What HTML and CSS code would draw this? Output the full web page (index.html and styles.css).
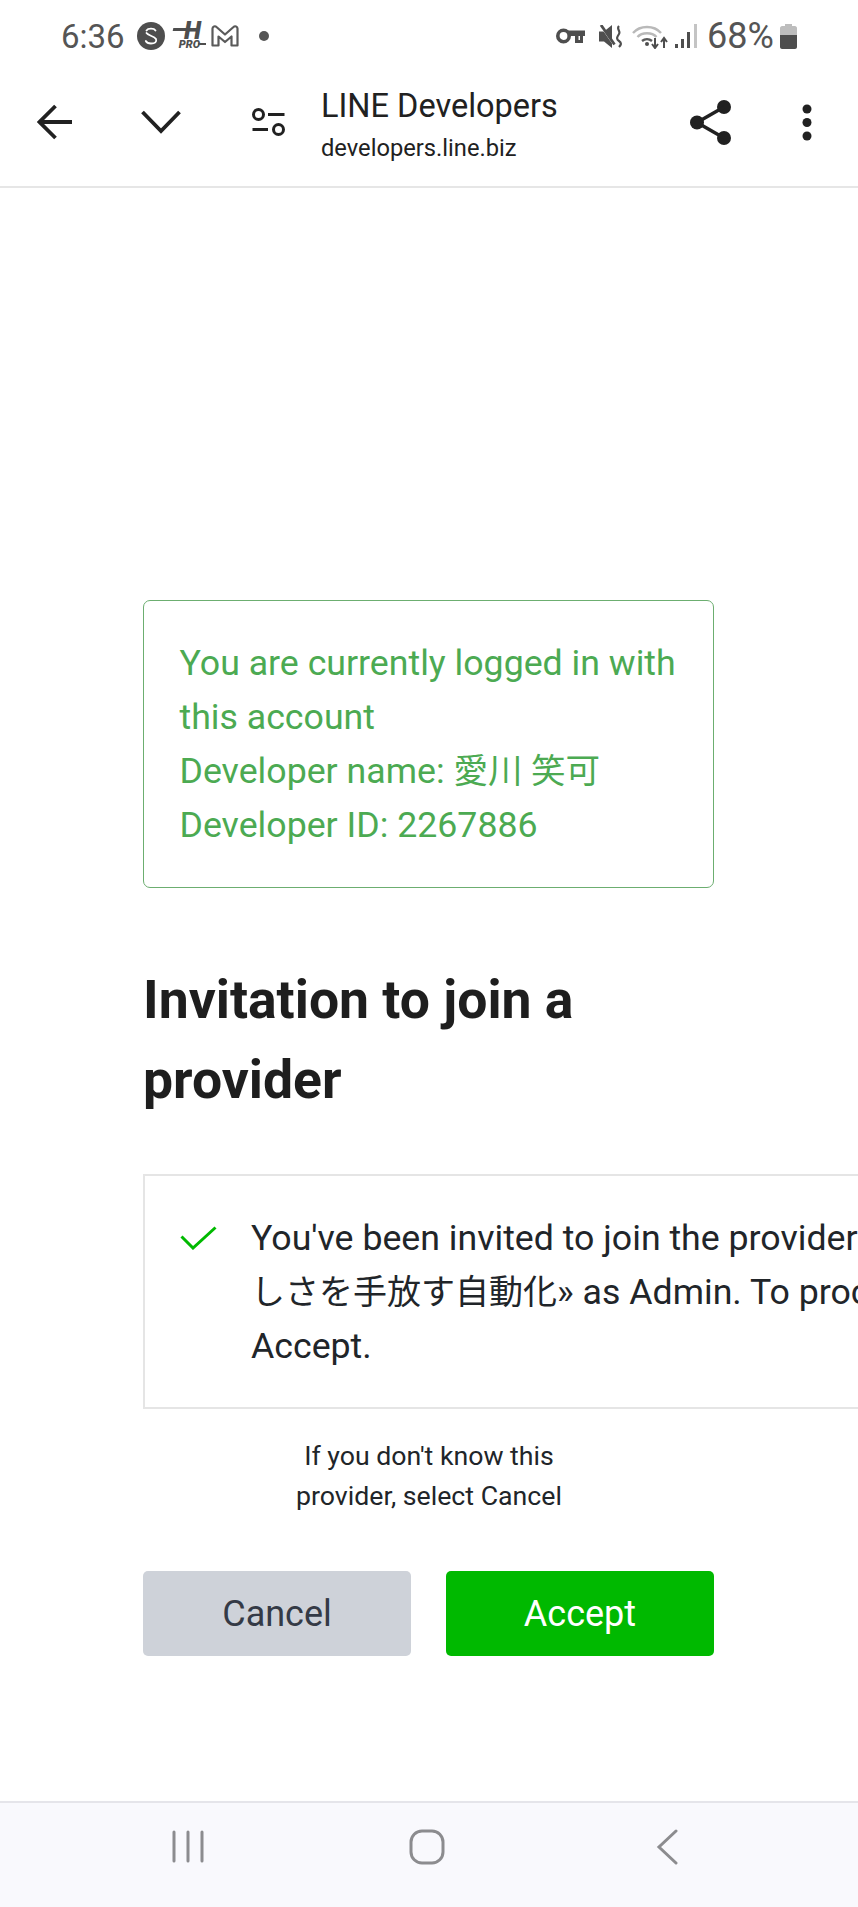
FILE: index.html
```html
<!DOCTYPE html>
<html lang="en">
<head>
<meta charset="utf-8">
<title>LINE Developers</title>
<link rel="stylesheet" href="styles.css">
</head>
<body>
<div class="screen">
  <div class="status">
    <span class="time">6:36</span>
    <svg class="ic-s" viewBox="0 0 28 28"><circle cx="14" cy="14" r="14" fill="#4e4e4e"/><path d="M9.500 8.500C11 6 17 6 18.500 8.500M9.500 11C11 13.500 17 14 19 17 20 20 18 21.500 14 21.500 11 21.500 9.500 20.500 8.800 19" fill="none" stroke="#fff" stroke-width="1.800" stroke-linecap="round"/></svg>
    <span class="ic-h"><span class="h-main">H</span><span class="h-pro">PRO</span></span>
    <svg class="ic-m" viewBox="0 0 28 22"><path d="M1.500 3.500V20.500H7.500V11.500L14 17 20.500 11.500V20.500H26.500V3.500C26.500 1.500 24 .5 22.500 2L14 9.500 5.500 2C4 .5 1.500 1.500 1.500 3.500Z" fill="none" stroke="#5a5a5a" stroke-width="2.200" stroke-linejoin="round"/></svg>
    <span class="dot"></span>
    <span class="spacer"></span>
    <svg class="ic-key" viewBox="0 0 29 16"><circle cx="7.500" cy="8" r="5.700" fill="none" stroke="#4e4e4e" stroke-width="3.600"/><path d="M12 2.500H29V8H27V15H19V8H12Z" fill="#4e4e4e"/><rect x="22.500" y="8" width="1.500" height="4" fill="#fff"/></svg>
    <svg class="ic-mute" viewBox="0 0 23 23"><path d="M0 6.500H5L13 0V23L5 16.500H0Z" fill="#4e4e4e"/><path d="M1.500 1L15 20.500" stroke="#fff" stroke-width="1.200"/><path d="M2 0L15.500 19.500" stroke="#4e4e4e" stroke-width="2.800"/><path d="M20 1C17 4 22 6 20 9S17 14 20 16 22 20 20 22" fill="none" stroke="#4e4e4e" stroke-width="2.200"/></svg>
    <svg class="ic-wifi" viewBox="0 0 36 25"><path d="M1 9C8 1 22 1 29 9" fill="none" stroke="#b9b9b9" stroke-width="2.400"/><path d="M5.500 13C10 8 20 8 24.500 13" fill="none" stroke="#b9b9b9" stroke-width="2.400"/><path d="M10 17C13 14.500 17 14.500 20 17" fill="none" stroke="#5a5a5a" stroke-width="2.400"/><circle cx="15" cy="20" r="2" fill="#4e4e4e"/><path d="M23 14V23M20 20L23 24 26 20M32 24V15M29 18L32 14 35 18" fill="none" stroke="#4e4e4e" stroke-width="2"/></svg>
    <svg class="ic-signal" viewBox="0 0 22 25"><g fill="#4e4e4e"><rect x="0" y="20" width="3" height="4"/><rect x="6" y="15" width="3" height="9"/><rect x="12" y="8" width="3" height="16"/></g><rect x="19" y="0" width="3" height="24" fill="#c4c4c4"/></svg>
    <span class="pct">68%</span>
    <svg class="ic-batt" viewBox="0 0 17 25"><path d="M5 0H12V2H15C16 2 17 3 17 4V11H0V4C0 3 1 2 2 2H5Z" fill="#bdbdbd"/><path d="M0 11H17V23C17 24 16 25 15 25H2C1 25 0 24 0 23Z" fill="#4e4e4e"/></svg>
  </div>

  <div class="toolbar">
    <svg class="tb-back" viewBox="0 0 36 36"><path d="M35 18H3M18.500 2L2.500 18 18.500 34" fill="none" stroke="#212121" stroke-width="3.800"/></svg>
    <svg class="tb-chev" viewBox="0 0 40 24"><path d="M1.500 2L20 21 38.500 2" fill="none" stroke="#212121" stroke-width="3.800"/></svg>
    <svg class="tb-tune" viewBox="0 0 33 28"><g fill="none" stroke="#212121" stroke-width="3"><circle cx="6.500" cy="6.500" r="5"/><circle cx="26.500" cy="21.500" r="5"/><path d="M16 6.500H32.500M0.500 21.500H16"/></g></svg>
    <div class="tb-title">
      <div class="tb-name">LINE Developers</div>
      <div class="tb-url">developers.line.biz</div>
    </div>
    <svg class="tb-share" viewBox="0 0 41 45"><g fill="#212121"><circle cx="34" cy="7" r="7"/><circle cx="7" cy="22.500" r="7"/><circle cx="34" cy="38" r="7"/></g><path d="M34 7L7 22.500 34 38" fill="none" stroke="#212121" stroke-width="3.500"/></svg>
    <svg class="tb-more" viewBox="0 0 10 37"><g fill="#212121"><circle cx="5" cy="5" r="4.500"/><circle cx="5" cy="18.500" r="4.500"/><circle cx="5" cy="32" r="4.500"/></g></svg>
  </div>

  <main class="main">
    <div class="notice">You are currently logged in with this account<br>Developer name: <span class="cjk">愛川 笑可</span><br>Developer ID: 2267886</div>
    <h1 class="title">Invitation to join a provider</h1>
    <div class="card">
      <svg class="card-check" viewBox="0 0 37 24"><path d="M1.500 10.500L13 22 35.500 1.500" fill="none" stroke="#00b900" stroke-width="3"/></svg>
      <p class="card-text">You've been invited to join the provider «<span class="cjk">忙</span><br><span class="cjk">しさを手放す自動化</span>» as Admin. To proceed, select<br>Accept.</p>
    </div>
    <p class="hint">If you don't know this<br>provider, select Cancel</p>
    <div class="actions">
      <button class="btn btn-cancel">Cancel</button>
      <button class="btn btn-accept">Accept</button>
    </div>
  </main>

  <div class="navbar">
    <svg class="nav-recent" viewBox="0 0 32 33"><path d="M2 2V31M16 2V31M30 2V31" stroke="#8c8c8f" stroke-width="3" stroke-linecap="round"/></svg>
    <svg class="nav-home" viewBox="0 0 36 36"><rect x="2" y="2" width="32" height="32" rx="11" fill="none" stroke="#8c8c8f" stroke-width="3"/></svg>
    <svg class="nav-back" viewBox="0 0 22 36"><path d="M20 2L3 18 20 34" fill="none" stroke="#8c8c8f" stroke-width="3" stroke-linecap="round"/></svg>
  </div>
</div>
</body>
</html>
```
FILE: styles.css
```css
* { box-sizing: border-box; }
html, body { margin: 0; padding: 0; background: #fff; }
body { font-family: Roboto, "Noto Sans CJK JP", sans-serif; }
.screen { width: 858px; height: 1907px; display: flex; flex-direction: column; overflow: hidden; background: #fff; }

.status { height: 66px; display: flex; align-items: center; padding: 6px 61px 0 61px; color: #555; flex: none; }
.time { font-size: 33px; line-height: 1; width: 76px; }
.ic-s { width: 28px; height: 28px; }
.ic-h { width: 33px; height: 28px; margin-left: 8px; display: flex; flex-direction: column; font-style: italic; font-weight: 900; color: #4e4e4e; line-height: 1; align-items: center; position: relative; }
.ic-h::before { content: ""; position: absolute; left: 0; top: 6px; width: 26px; height: 3px; background: #4e4e4e; transform: skewX(-12deg); }
.ic-h::after { content: ""; position: absolute; right: 0; bottom: 5px; width: 8px; height: 2px; background: #4e4e4e; }
.h-main { font-size: 25px; line-height: 18px; margin-left: 6px; }
.h-pro { font-size: 11px; line-height: 10px; }
.ic-m { width: 28px; height: 22px; margin-left: 5px; }
.dot { width: 10px; height: 10px; border-radius: 50%; background: #555; margin-left: 20px; }
.spacer { flex: 1; }
.ic-key { width: 29px; height: 16px; }
.ic-mute { width: 23px; height: 23px; margin-left: 14px; }
.ic-wifi { width: 36px; height: 25px; margin-left: 10px; }
.ic-signal { width: 22px; height: 25px; margin-left: 7px; }
.pct { font-size: 36px; line-height: 1; margin-left: 10px; width: 73px; }
.ic-batt { width: 17px; height: 25px; }

.toolbar { height: 122px; flex: none; display: flex; align-items: center; border-bottom: 2px solid #e6e6e6; padding-left: 37px; padding-bottom: 8px; }
.tb-back { width: 36px; height: 36px; }
.tb-chev { width: 40px; height: 24px; margin-left: 68px; }
.tb-tune { width: 33px; height: 28px; margin-left: 71px; }
.tb-title { margin: 8px 0 0 36px; width: 369px; color: #212121; }
.tb-name { font-size: 32.500px; line-height: 40px; }
.tb-url { font-size: 23.700px; line-height: 36px; margin-top: 4px; }
.tb-share { width: 41px; height: 45px; }
.tb-more { width: 10px; height: 37px; margin-left: 71px; }

.main { flex: 1; padding: 412px 0 0 143px; overflow: hidden; }
.cjk { font-size: 34.500px; }
.notice { width: 571px; height: 288px; padding: 34.500px 35.500px; border: 1.500px solid #6cae70; border-radius: 7px; color: #4caa52; font-size: 35.700px; line-height: 54px; }
.title { width: 572px; margin: 72px 0 54px; font-size: 53.500px; line-height: 80px; font-weight: 700; color: #1e1e1e; }
.card { width: 860px; height: 235px; display: flex; border: 2px solid #e5e5e5; padding: 35px 0 0 35px; }
.card-check { width: 37px; height: 24px; margin: 15px 0 0 0; flex: none; }
.card-text { margin: 0 0 0 34px; font-size: 35.700px; line-height: 54px; color: #212529; white-space: nowrap; }
.card-text .cjk { font-size: 34px; }
.hint { width: 572px; margin: 27px 0 55px; text-align: center; font-size: 26.700px; line-height: 40px; color: #212529; }
.actions { width: 571px; display: flex; gap: 35px; }
.btn { flex: 1; height: 85px; border: 0; border-radius: 5px; font-family: inherit; font-size: 36px; padding: 0; }
.btn-cancel { background: #ced2d9; color: #343a46; }
.btn-accept { background: #00b900; color: #fff; }

.navbar { height: 106px; flex: none; display: flex; align-items: center; background: #f9f9fd; border-top: 2px solid #e5e5ea; padding-left: 172px; padding-bottom: 17px; }
.nav-recent { width: 32px; height: 33px; }
.nav-home { width: 36px; height: 36px; margin-left: 205px; }
.nav-back { width: 22px; height: 36px; margin-left: 211px; }
```
